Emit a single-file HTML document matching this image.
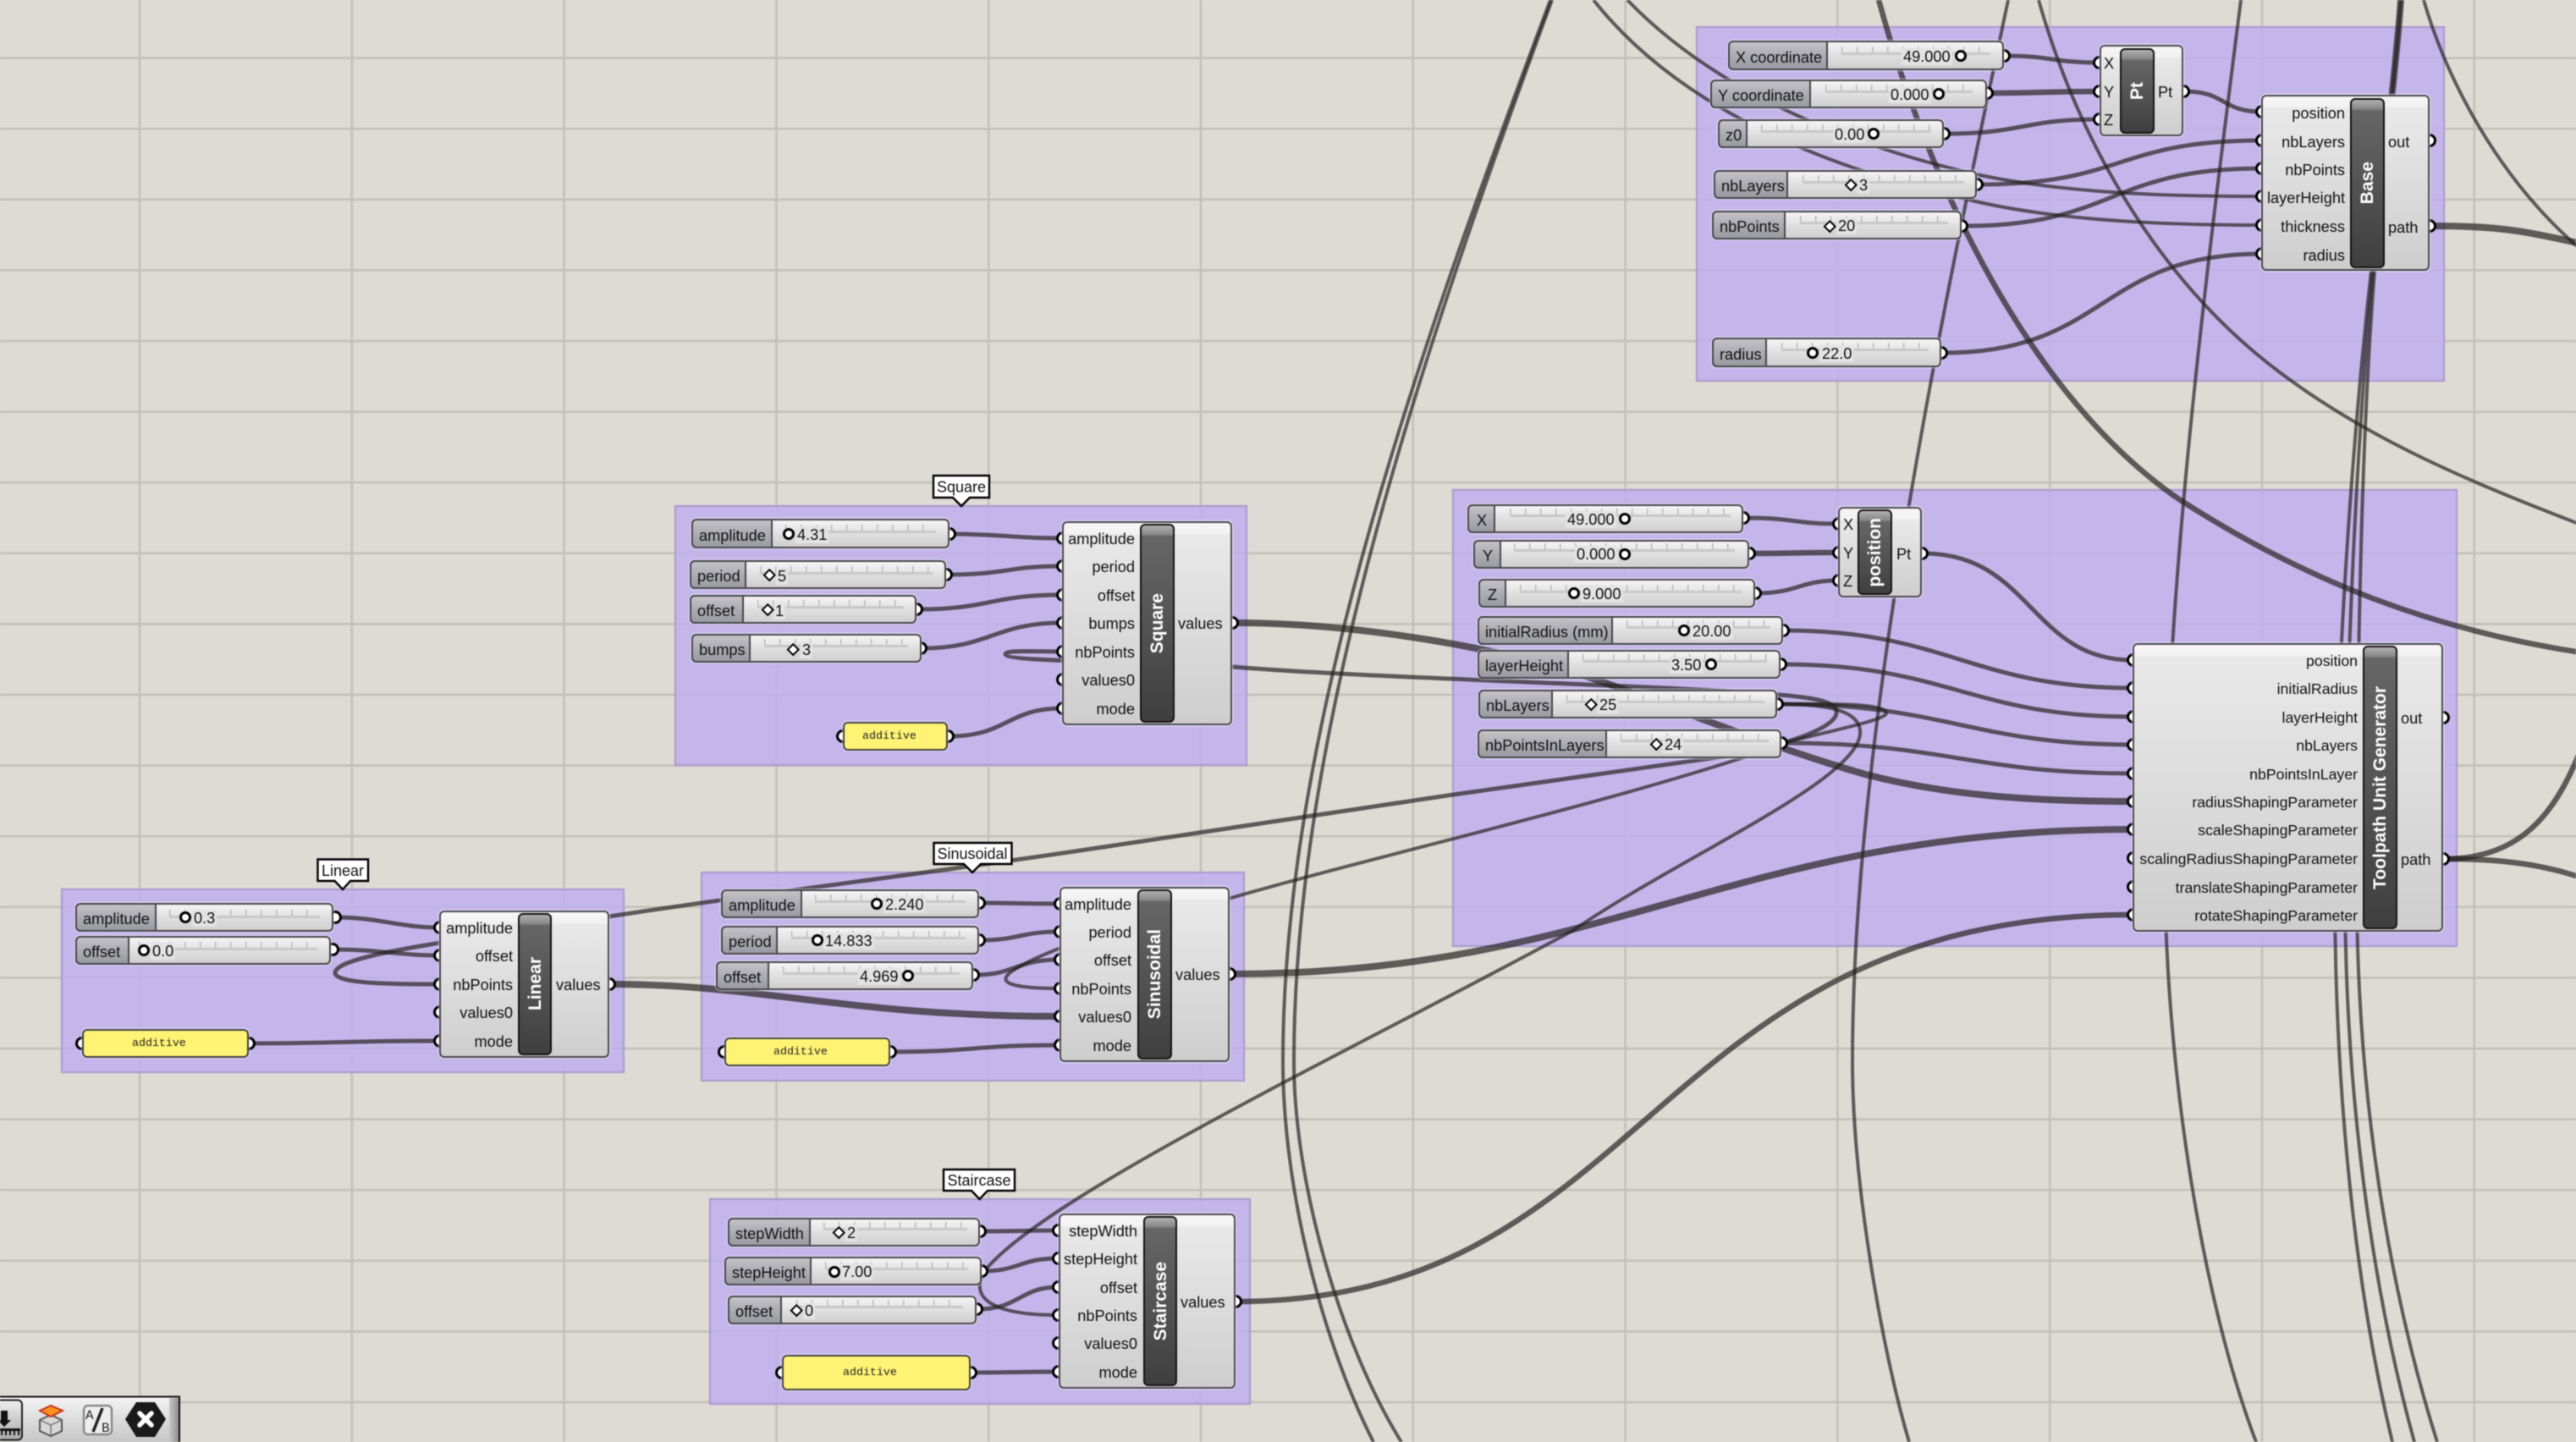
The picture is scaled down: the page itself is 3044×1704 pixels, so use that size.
<!DOCTYPE html>
<html><head><meta charset="utf-8"><title>Grasshopper canvas</title>
<style>
html,body{margin:0;padding:0;background:#dddbd4}
#r{position:relative;width:3044px;height:1704px;overflow:hidden;z-index:0;font-family:"Liberation Sans",sans-serif;font-size:18.2px;color:#111;background:#dddbd4;filter:blur(.45px)}
#r svg{position:absolute;left:0;top:0}
.gr{stroke:#c4c1b9;stroke-width:2.7;fill:none}
.gp{fill:rgb(192,176,238);fill-opacity:.86;stroke:#ac9fd0;stroke-width:2.3}
.w,.w2,.w3,.w4{fill:none;stroke:#23211e;stroke-opacity:.69;stroke-linecap:butt}
.w{stroke-width:4}.w2{stroke-width:5}.w3{stroke-width:8}.w4{stroke-width:6.5}
.g{position:absolute;width:16px;height:16px;margin:-8px 0 0 -8px;box-sizing:border-box;border:3.5px solid #000;border-radius:50%;background:#fff}
.s{position:absolute;box-sizing:border-box;border:2px solid #48484c;border-radius:6px;background:linear-gradient(#f4f4f4 0,#ececec 22%,#dedede 55%,#cfcfcf 100%);box-shadow:0 0 0 1.5px rgba(255,255,255,.35)}
b{position:absolute;box-sizing:border-box;font-weight:normal;padding:1.5px 0 0 7px;border:2px solid #48484c;border-radius:6px 0 0 6px;background:linear-gradient(#c4c4c8 0,#b2b2b8 35%,#9a9aa2 100%);white-space:pre}
.t{position:absolute;height:10px;background:linear-gradient(#c8c8c8,#c8c8c8) left bottom/100% 3px no-repeat,repeating-linear-gradient(90deg,#bababa 0,#bababa 1.6px,transparent 1.6px,transparent 18px)}
u{position:absolute;text-decoration:none;line-height:20px;margin:-10px 0 0 -2px;padding:0 2px;background:#e3e3e3}
.k{position:absolute;width:14px;height:14px;margin:-7px 0 0 -7px;box-sizing:border-box;border:3.6px solid #000;border-radius:50%;background:#fff}
.d{position:absolute;width:10.5px;height:10.5px;margin:-5.2px 0 0 -5.2px;box-sizing:border-box;border:2.4px solid #000;background:#fff;transform:rotate(45deg)}
.c{position:absolute;box-sizing:border-box;border:2px solid #4a4a50;border-radius:6px;background:linear-gradient(#f6f6f6 0,#f2f2f2 12px,#e9e9e9 14px,#cecece 100%);box-shadow:0 0 0 1.5px rgba(255,255,255,.4)}
.b{position:absolute;box-sizing:border-box;border:2px solid #151515;border-radius:6px;background:linear-gradient(#b0b0b0 0,#8a8a8a 10px,#666 13px,#3f3f3f 100%);display:flex;align-items:center;justify-content:center;overflow:hidden}
.b span{writing-mode:vertical-rl;transform:rotate(180deg);color:#fff;font-weight:bold;font-size:21px;white-space:nowrap;line-height:1}
p{position:absolute;margin:0;line-height:20px;white-space:pre}
p.f{font-size:17.7px}
.y{position:absolute;box-sizing:border-box;border:2px solid #444;border-radius:6px;background:#fff375;box-shadow:0 0 0 1.5px rgba(255,255,255,.35)}
tt{position:absolute;font-family:"Liberation Mono",monospace;font-size:13.3px;line-height:16px;margin-top:-8px;color:#222}
</style></head>
<body><div id="r">
<svg width="3044" height="1704" viewBox="0 0 3044 1704" style="z-index:-2">
<path class="gr" d="M165 0V1704M415.8 0V1704M666.6 0V1704M917.4 0V1704M1168.2 0V1704M1419 0V1704M1669.8 0V1704M1920.6 0V1704M2171.4 0V1704M2422.2 0V1704M2673 0V1704M2923.8 0V1704M0 68.6H3044M0 152.2H3044M0 235.8H3044M0 319.4H3044M0 403H3044M0 486.6H3044M0 570.2H3044M0 653.8H3044M0 737.4H3044M0 821H3044M0 904.6H3044M0 988.2H3044M0 1071.8H3044M0 1155.4H3044M0 1239H3044M0 1322.6H3044M0 1406.2H3044M0 1489.8H3044M0 1573.4H3044M0 1657H3044"/>
<rect class="gp" x="73" y="1051" width="664" height="216"/>
<rect class="gp" x="798" y="598" width="675" height="306"/>
<rect class="gp" x="829" y="1031" width="641" height="246"/>
<rect class="gp" x="839" y="1417" width="638" height="242"/>
<rect class="gp" x="2005" y="32" width="883" height="418"/>
<rect class="gp" x="1717" y="579" width="1186" height="539"/>
<!-- long background wires -->
<path class="w" d="M1832,0 C1690,380 1516,850 1516,1254 C1516,1400 1560,1580 1623,1704"/>
<path class="w" d="M1834,0 C1694,380 1529,850 1529,1254 C1529,1400 1585,1590 1656,1704"/>
<path class="w" d="M2373,0 C2310,300 2189,850 2189,1254 C2189,1400 2225,1600 2256,1704"/>
<path class="w" d="M2648,0 C2610,300 2558,700 2558,1020 C2558,1250 2600,1530 2666,1704"/>
<path class="w" d="M2835,0 C2826,120 2808,240 2802,320 C2780,520 2759,800 2759,1050 C2759,1300 2785,1530 2827,1704"/>
<path class="w" d="M2837,0 C2828,120 2810,240 2804,320 C2785,520 2771,800 2771,1050 C2771,1300 2805,1530 2853,1704"/>
<path class="w" d="M2839,0 C2830,120 2812,240 2806,320 C2790,520 2785,800 2785,1050 C2785,1300 2825,1530 2880,1704"/>
<path class="w4" d="M2220,0 C2280,220 2400,470 2575,590 C2730,690 2880,745 3050,771"/>
<path class="w" d="M2409,0 C2460,180 2560,340 2694,440 C2800,520 2920,570 3050,620"/>
<path class="w" d="M2864,0 C2890,90 2950,210 3050,295"/>
<path class="w" d="M1923,0 C2000,80 2130,160 2340,207 C2450,230 2580,232 2672,232"/>
<path class="w" d="M1883,0 C1970,110 2120,190 2322,235 C2430,262 2570,266 2672,266"/>
<!-- base group -->
<path class="w2" d="M2370,66 C2425,66 2425,74 2481,74"/>
<path class="w4" d="M2350,110 C2415,110 2415,108 2481,108"/>
<path class="w2" d="M2299,158 C2390,158 2390,141 2481,141"/>
<path class="w2" d="M2582,108 C2630,108 2625,132 2672,132"/>
<path class="w2" d="M2338,218 C2510,218 2500,166 2672,166"/>
<path class="w2" d="M2320,267 C2500,267 2490,199 2672,199"/>
<path class="w2" d="M2296,417 C2490,417 2480,300 2672,300"/>
<path class="w3" d="M2873,267 C2950,267 2980,272 3050,288"/>
<path class="w4" d="M2888,1015 C2980,1015 3020,960 3050,885"/>
<path class="w4" d="M2888,1015 C2950,1015 3000,1020 3050,1037"/>
<!-- toolpath group -->
<path class="w2" d="M2062,612 C2120,612 2120,619 2172,619"/>
<path class="w4" d="M2069,654 C2120,654 2120,653 2172,653"/>
<path class="w2" d="M2075,701 C2125,701 2125,686 2172,686"/>
<path class="w2" d="M2273,654 C2400,654 2400,780 2520,780"/>
<path class="w2" d="M2109,745 C2300,745 2330,813 2520,813"/>
<path class="w2" d="M2106,785 C2300,785 2330,847 2520,847"/>
<path class="w2" d="M2102,832 C2300,832 2330,880 2520,880"/>
<path class="w2" d="M2107,878 C2300,878 2330,914 2520,914"/>
<path class="w3" d="M1458,736 C1600,736 1780,765 1900,808 C2000,845 2100,885 2204,915 C2300,940 2400,947 2520,947"/>
<path class="w3" d="M1455,1151 C1900,1151 2050,980 2520,980"/>
<path class="w4" d="M1461,1538 C1950,1538 1950,1081 2520,1081"/>
<path class="w3" d="M722,1163 C900,1163 1000,1201 1252,1201"/>
<!-- loops -->
<path class="w" d="M2103,832 C2175,832 2200,845 2198,868 C2190,925 1990,1010 1858,1100 C1600,1240 1240,1410 1165,1500 C1145,1530 1165,1554 1250,1554"/>
<path class="w2" d="M2107,878 C2150,865 2172,852 2170,840 C2168,825 2120,822 2060,818 C1900,808 1600,800 1457,788 C1350,782 1188,782 1188,773 C1188,768 1220,770 1255,770"/>
<path class="w" d="M2107,878 C2170,862 2232,850 2229,842 C2225,830 2150,832 2100,832"/>
<path class="w2" d="M2100,885 C1900,912 1500,970 1310,1000 C1100,1032 900,1055 720,1083 C600,1105 394,1125 396,1150 C398,1163 470,1163 519,1163"/>
<path class="w" d="M2100,882 C1900,950 1650,1005 1455,1061 C1330,1095 1250,1115 1200,1145 C1175,1160 1190,1168 1252,1168"/>
<!-- linear local -->
<path class="w2" d="M396,1084 C450,1084 470,1096 519,1096"/>
<path class="w2" d="M393,1122 C450,1122 470,1129 519,1129"/>
<path class="w2" d="M295,1233 C400,1233 410,1230 519,1230"/>
<!-- square local -->
<path class="w2" d="M1123,631 C1190,631 1190,636 1255,636"/>
<path class="w2" d="M1120,679 C1190,679 1190,669 1255,669"/>
<path class="w2" d="M1085,720 C1170,720 1170,703 1255,703"/>
<path class="w2" d="M1090,766 C1170,766 1175,736 1255,736"/>
<path class="w2" d="M1122,870 C1190,870 1190,837 1255,837"/>
<!-- sinusoidal local -->
<path class="w2" d="M1158,1067 C1205,1067 1205,1068 1252,1068"/>
<path class="w2" d="M1158,1111 C1205,1111 1205,1101 1252,1101"/>
<path class="w2" d="M1152,1152 C1200,1152 1200,1134 1252,1134"/>
<path class="w2" d="M1053,1243 C1150,1243 1150,1235 1252,1235"/>
<!-- staircase local -->
<path class="w2" d="M1159,1455 C1205,1455 1205,1454 1250,1454"/>
<path class="w2" d="M1161,1502 C1205,1502 1205,1487 1250,1487"/>
<path class="w2" d="M1155,1547 C1205,1547 1205,1521 1250,1521"/>
<path class="w2" d="M1148,1622 C1200,1622 1200,1621 1250,1621"/>
</svg>

<!-- LINEAR -->
<i class="g" style="left:396px;top:1084px"></i><i class="g" style="left:393px;top:1122px"></i>
<i class="g" style="left:97px;top:1233px"></i><i class="g" style="left:294px;top:1233px"></i>
<i class="g" style="left:520px;top:1096px"></i><i class="g" style="left:520px;top:1129px"></i><i class="g" style="left:520px;top:1163px"></i><i class="g" style="left:520px;top:1196px"></i><i class="g" style="left:520px;top:1230px"></i><i class="g" style="left:720px;top:1163px"></i>

<div class="s" style="left:89px;top:1067px;width:305px;height:34px"></div><b style="left:89px;top:1067px;width:96px;height:34px;line-height:31px">amplitude</b><i class="t" style="left:200px;top:1075px;width:178px"></i><u style="left:229px;top:1085px">0.3</u><i class="k" style="left:219px;top:1084px"></i>
<div class="s" style="left:89px;top:1106px;width:302px;height:34px"></div><b style="left:89px;top:1106px;width:64px;height:34px;line-height:31px">offset</b><i class="t" style="left:164px;top:1113px;width:211px"></i><u style="left:180px;top:1124px">0.0</u><i class="k" style="left:170px;top:1123px"></i>
<div class="y" style="left:97px;top:1216px;width:197px;height:34px"></div><tt style="left:156px;top:1233px">additive</tt>

<div class="c" style="left:519px;top:1076px;width:201px;height:174px"></div>
<div class="b" style="left:612px;top:1079px;width:40px;height:168px"><span>Linear</span></div>
<p style="right:2438px;top:1087px">amplitude</p><p style="right:2438px;top:1120px">offset</p><p style="right:2438px;top:1154px">nbPoints</p><p style="right:2438px;top:1187px">values0</p><p style="right:2438px;top:1221px">mode</p><p style="left:657px;top:1154px">values</p>

<!-- SQUARE -->
<i class="g" style="left:1122px;top:631px"></i><i class="g" style="left:1118px;top:679px"></i><i class="g" style="left:1083px;top:720px"></i><i class="g" style="left:1088px;top:766px"></i><i class="g" style="left:996px;top:870px"></i><i class="g" style="left:1120px;top:870px"></i>
<i class="g" style="left:1256px;top:636px"></i><i class="g" style="left:1256px;top:669px"></i><i class="g" style="left:1256px;top:703px"></i><i class="g" style="left:1256px;top:736px"></i><i class="g" style="left:1256px;top:770px"></i><i class="g" style="left:1256px;top:803px"></i><i class="g" style="left:1256px;top:837px"></i><i class="g" style="left:1456px;top:736px"></i>

<div class="s" style="left:817px;top:613px;width:305px;height:35px"></div><b style="left:817px;top:613px;width:96px;height:35px;line-height:32px">amplitude</b><i class="t" style="left:928px;top:620px;width:178px"></i><u style="left:942px;top:632px">4.31</u><i class="k" style="left:932px;top:631px"></i>
<div class="s" style="left:815px;top:662px;width:303px;height:34px"></div><b style="left:815px;top:662px;width:67px;height:34px;line-height:31px">period</b><i class="t" style="left:898px;top:669px;width:204px"></i><u style="left:919px;top:681px">5</u><i class="d" style="left:909px;top:679px"></i>
<div class="s" style="left:815px;top:703px;width:268px;height:34px"></div><b style="left:815px;top:703px;width:64px;height:34px;line-height:31px">offset</b><i class="t" style="left:895px;top:709px;width:173px"></i><u style="left:916px;top:722px">1</u><i class="d" style="left:907px;top:720px"></i>
<div class="s" style="left:817px;top:749px;width:272px;height:34px"></div><b style="left:817px;top:749px;width:70px;height:34px;line-height:31px">bumps</b><i class="t" style="left:903px;top:755px;width:170px"></i><u style="left:948px;top:768px">3</u><i class="d" style="left:937px;top:767px"></i>
<div class="y" style="left:996px;top:853px;width:124px;height:34px"></div><tt style="left:1019px;top:870px">additive</tt>

<div class="c" style="left:1255px;top:616px;width:201px;height:241px"></div>
<div class="b" style="left:1347px;top:619px;width:41px;height:235px"><span>Square</span></div>
<p style="right:1703px;top:627px">amplitude</p><p style="right:1703px;top:660px">period</p><p style="right:1703px;top:694px">offset</p><p style="right:1703px;top:727px">bumps</p><p style="right:1703px;top:761px">nbPoints</p><p style="right:1703px;top:794px">values0</p><p style="right:1703px;top:828px">mode</p><p style="left:1392px;top:727px">values</p>

<!-- SINUSOIDAL -->
<i class="g" style="left:1157px;top:1067px"></i><i class="g" style="left:1157px;top:1111px"></i><i class="g" style="left:1150px;top:1152px"></i><i class="g" style="left:856px;top:1243px"></i><i class="g" style="left:1052px;top:1243px"></i>
<i class="g" style="left:1253px;top:1068px"></i><i class="g" style="left:1253px;top:1101px"></i><i class="g" style="left:1253px;top:1134px"></i><i class="g" style="left:1253px;top:1168px"></i><i class="g" style="left:1253px;top:1201px"></i><i class="g" style="left:1253px;top:1235px"></i><i class="g" style="left:1453px;top:1151px"></i>

<div class="s" style="left:852px;top:1051px;width:305px;height:34px"></div><b style="left:852px;top:1051px;width:96px;height:34px;line-height:31px">amplitude</b><i class="t" style="left:963px;top:1057px;width:178px"></i><u style="left:1046px;top:1069px">2.240</u><i class="k" style="left:1036px;top:1068px"></i>
<div class="s" style="left:852px;top:1094px;width:305px;height:34px"></div><b style="left:852px;top:1094px;width:67px;height:34px;line-height:31px">period</b><i class="t" style="left:935px;top:1100px;width:206px"></i><u style="left:975px;top:1112px">14.833</u><i class="k" style="left:966px;top:1111px"></i>
<div class="s" style="left:846px;top:1136px;width:304px;height:34px"></div><b style="left:846px;top:1136px;width:63px;height:34px;line-height:31px">offset</b><i class="t" style="left:925px;top:1142px;width:209px"></i><u style="left:1016px;top:1154px">4.969</u><i class="k" style="left:1073px;top:1153px"></i>
<div class="y" style="left:856px;top:1226px;width:196px;height:34px"></div><tt style="left:914px;top:1243px">additive</tt>

<div class="c" style="left:1252px;top:1048px;width:201px;height:207px"></div>
<div class="b" style="left:1344px;top:1051px;width:41px;height:201px"><span>Sinusoidal</span></div>
<p style="right:1707px;top:1059px">amplitude</p><p style="right:1707px;top:1092px">period</p><p style="right:1707px;top:1125px">offset</p><p style="right:1707px;top:1159px">nbPoints</p><p style="right:1707px;top:1192px">values0</p><p style="right:1707px;top:1226px">mode</p><p style="left:1389px;top:1142px">values</p>

<!-- STAIRCASE -->
<i class="g" style="left:1158px;top:1455px"></i><i class="g" style="left:1160px;top:1502px"></i><i class="g" style="left:1154px;top:1547px"></i><i class="g" style="left:924px;top:1622px"></i><i class="g" style="left:1147px;top:1622px"></i>
<i class="g" style="left:1251px;top:1454px"></i><i class="g" style="left:1251px;top:1487px"></i><i class="g" style="left:1251px;top:1521px"></i><i class="g" style="left:1251px;top:1554px"></i><i class="g" style="left:1251px;top:1587px"></i><i class="g" style="left:1251px;top:1621px"></i><i class="g" style="left:1460px;top:1538px"></i>

<div class="s" style="left:860px;top:1439px;width:298px;height:34px"></div><b style="left:860px;top:1439px;width:98px;height:34px;line-height:31px">stepWidth</b><i class="t" style="left:973px;top:1444px;width:170px"></i><u style="left:1001px;top:1457px">2</u><i class="d" style="left:991px;top:1456px"></i>
<div class="s" style="left:856px;top:1485px;width:304px;height:34px"></div><b style="left:856px;top:1485px;width:103px;height:34px;line-height:31px">stepHeight</b><i class="t" style="left:975px;top:1491px;width:169px"></i><u style="left:995px;top:1503px">7.00</u><i class="k" style="left:986px;top:1503px"></i>
<div class="s" style="left:860px;top:1531px;width:294px;height:34px"></div><b style="left:860px;top:1531px;width:64px;height:34px;line-height:31px">offset</b><i class="t" style="left:941px;top:1536px;width:197px"></i><u style="left:951px;top:1549px">0</u><i class="d" style="left:941px;top:1548px"></i>
<div class="y" style="left:924px;top:1601px;width:223px;height:42px"></div><tt style="left:996px;top:1622px">additive</tt>

<div class="c" style="left:1251px;top:1434px;width:209px;height:207px"></div>
<div class="b" style="left:1351px;top:1437px;width:40px;height:201px"><span>Staircase</span></div>
<p style="right:1700px;top:1445px">stepWidth</p><p style="right:1700px;top:1478px">stepHeight</p><p style="right:1700px;top:1512px">offset</p><p style="right:1700px;top:1545px">nbPoints</p><p style="right:1700px;top:1578px">values0</p><p style="right:1700px;top:1612px">mode</p><p style="left:1395px;top:1529px">values</p>

<!-- BASE GROUP -->
<i class="g" style="left:2368px;top:66px"></i><i class="g" style="left:2348px;top:110px"></i><i class="g" style="left:2297px;top:158px"></i><i class="g" style="left:2336px;top:218px"></i><i class="g" style="left:2318px;top:267px"></i><i class="g" style="left:2294px;top:417px"></i>
<i class="g" style="left:2481px;top:74px"></i><i class="g" style="left:2481px;top:108px"></i><i class="g" style="left:2481px;top:141px"></i><i class="g" style="left:2580px;top:108px"></i>
<i class="g" style="left:2673px;top:132px"></i><i class="g" style="left:2673px;top:166px"></i><i class="g" style="left:2673px;top:199px"></i><i class="g" style="left:2673px;top:232px"></i><i class="g" style="left:2673px;top:266px"></i><i class="g" style="left:2673px;top:300px"></i><i class="g" style="left:2871px;top:166px"></i><i class="g" style="left:2871px;top:267px"></i>

<div class="s" style="left:2042px;top:48px;width:326px;height:35px"></div><b style="left:2042px;top:48px;width:118px;height:35px;line-height:32px">X coordinate</b><i class="t" style="left:2176px;top:55px;width:176px"></i><u style="left:2249px;top:67px">49.000</u><i class="k" style="left:2317px;top:66px"></i>
<div class="s" style="left:2021px;top:94px;width:327px;height:34px"></div><b style="left:2021px;top:94px;width:119px;height:34px;line-height:31px">Y coordinate</b><i class="t" style="left:2157px;top:100px;width:174px"></i><u style="left:2234px;top:112px">0.000</u><i class="k" style="left:2291px;top:111px"></i>
<div class="s" style="left:2030px;top:141px;width:267px;height:34px"></div><b style="left:2030px;top:141px;width:35px;height:34px;line-height:31px">z0</b><i class="t" style="left:2081px;top:147px;width:201px"></i><u style="left:2168px;top:159px">0.00</u><i class="k" style="left:2214px;top:158px"></i>
<div class="s" style="left:2025px;top:201px;width:311px;height:34px"></div><b style="left:2025px;top:201px;width:88px;height:34px;line-height:31px">nbLayers</b><i class="t" style="left:2130px;top:207px;width:191px"></i><u style="left:2197px;top:219px">3</u><i class="d" style="left:2187px;top:218px"></i>
<div class="s" style="left:2023px;top:249px;width:295px;height:34px"></div><b style="left:2023px;top:249px;width:87px;height:34px;line-height:31px">nbPoints</b><i class="t" style="left:2127px;top:255px;width:175px"></i><u style="left:2172px;top:267px">20</u><i class="d" style="left:2162px;top:267px"></i>
<div class="s" style="left:2023px;top:399px;width:271px;height:35px"></div><b style="left:2023px;top:399px;width:65px;height:35px;line-height:32px">radius</b><i class="t" style="left:2105px;top:405px;width:174px"></i><u style="left:2153px;top:418px">22.0</u><i class="k" style="left:2142px;top:417px"></i>

<div class="c" style="left:2481px;top:53px;width:99px;height:108px"></div>
<div class="b" style="left:2505px;top:57px;width:41px;height:101px"><span>Pt</span></div>
<p style="left:2486px;top:65px">X</p><p style="left:2486px;top:99px">Y</p><p style="left:2486px;top:132px">Z</p><p style="left:2550px;top:99px">Pt</p>

<div class="c" style="left:2672px;top:112px;width:199px;height:208px"></div>
<div class="b" style="left:2777px;top:116px;width:41px;height:201px"><span>Base</span></div>
<p style="right:273px;top:124px">position</p><p style="right:273px;top:158px">nbLayers</p><p style="right:273px;top:191px">nbPoints</p><p style="right:273px;top:224px">layerHeight</p><p style="right:273px;top:258px">thickness</p><p style="right:273px;top:292px">radius</p><p style="left:2822px;top:158px">out</p><p style="left:2822px;top:259px">path</p>

<!-- TOOLPATH GROUP -->
<i class="g" style="left:2060px;top:612px"></i><i class="g" style="left:2067px;top:654px"></i><i class="g" style="left:2074px;top:701px"></i><i class="g" style="left:2107px;top:745px"></i><i class="g" style="left:2104px;top:785px"></i><i class="g" style="left:2100px;top:832px"></i><i class="g" style="left:2105px;top:878px"></i>
<i class="g" style="left:2173px;top:619px"></i><i class="g" style="left:2173px;top:653px"></i><i class="g" style="left:2173px;top:686px"></i><i class="g" style="left:2271px;top:654px"></i>
<i class="g" style="left:2521px;top:780px"></i><i class="g" style="left:2521px;top:813px"></i><i class="g" style="left:2521px;top:847px"></i><i class="g" style="left:2521px;top:880px"></i><i class="g" style="left:2521px;top:914px"></i><i class="g" style="left:2521px;top:947px"></i><i class="g" style="left:2521px;top:980px"></i><i class="g" style="left:2521px;top:1014px"></i><i class="g" style="left:2521px;top:1048px"></i><i class="g" style="left:2521px;top:1081px"></i><i class="g" style="left:2887px;top:848px"></i><i class="g" style="left:2887px;top:1015px"></i>

<div class="s" style="left:1734px;top:596px;width:326px;height:34px"></div><b style="left:1734px;top:596px;width:33px;height:34px;line-height:31px;padding-left:9px">X</b><i class="t" style="left:1784px;top:601px;width:261px"></i><u style="left:1852px;top:614px">49.000</u><i class="k" style="left:1920px;top:613px"></i>
<div class="s" style="left:1741px;top:638px;width:326px;height:34px"></div><b style="left:1741px;top:638px;width:33px;height:34px;line-height:31px;padding-left:9px">Y</b><i class="t" style="left:1789px;top:642px;width:261px"></i><u style="left:1863px;top:655px">0.000</u><i class="k" style="left:1920px;top:655px"></i>
<div class="s" style="left:1747px;top:684px;width:327px;height:34px"></div><b style="left:1747px;top:684px;width:33px;height:34px;line-height:31px;padding-left:9px">Z</b><i class="t" style="left:1796px;top:691px;width:262px"></i><u style="left:1870px;top:702px">9.000</u><i class="k" style="left:1860px;top:701px"></i>
<div class="s" style="left:1746px;top:728px;width:361px;height:34px"></div><b style="left:1746px;top:728px;width:160px;height:34px;line-height:31px">initialRadius (mm)</b><i class="t" style="left:1922px;top:733px;width:170px"></i><u style="left:2000px;top:746px">20.00</u><i class="k" style="left:1990px;top:745px"></i>
<div class="s" style="left:1746px;top:768px;width:358px;height:34px"></div><b style="left:1746px;top:768px;width:108px;height:34px;line-height:31px">layerHeight</b><i class="t" style="left:1870px;top:773px;width:218px"></i><u style="left:1975px;top:786px">3.50</u><i class="k" style="left:2022px;top:785px"></i>
<div class="s" style="left:1747px;top:815px;width:353px;height:34px"></div><b style="left:1747px;top:815px;width:88px;height:34px;line-height:31px">nbLayers</b><i class="t" style="left:1851px;top:821px;width:234px"></i><u style="left:1890px;top:833px">25</u><i class="d" style="left:1880px;top:832px"></i>
<div class="s" style="left:1746px;top:862px;width:359px;height:34px"></div><b style="left:1746px;top:862px;width:153px;height:34px;line-height:31px">nbPointsInLayers</b><i class="t" style="left:1915px;top:867px;width:175px"></i><u style="left:1967px;top:880px">24</u><i class="d" style="left:1957px;top:879px"></i>

<div class="c" style="left:2172px;top:599px;width:99px;height:107px"></div>
<div class="b" style="left:2195px;top:602px;width:41px;height:101px"><span>position</span></div>
<p style="left:2178px;top:610px">X</p><p style="left:2178px;top:644px">Y</p><p style="left:2178px;top:677px">Z</p><p style="left:2241px;top:645px">Pt</p>

<div class="c" style="left:2520px;top:760px;width:367px;height:341px"></div>
<div class="b" style="left:2792px;top:763px;width:41px;height:335px"><span>Toolpath Unit Generator</span></div>
<p class="f" style="right:258px;top:771px">position</p><p class="f" style="right:258px;top:804px">initialRadius</p><p class="f" style="right:258px;top:838px">layerHeight</p><p class="f" style="right:258px;top:871px">nbLayers</p><p class="f" style="right:258px;top:905px">nbPointsInLayer</p><p class="f" style="right:258px;top:938px">radiusShapingParameter</p><p class="f" style="right:258px;top:971px">scaleShapingParameter</p><p class="f" style="right:258px;top:1005px">scalingRadiusShapingParameter</p><p class="f" style="right:258px;top:1039px">translateShapingParameter</p><p class="f" style="right:258px;top:1072px">rotateShapingParameter</p><p style="left:2837px;top:839px">out</p><p style="left:2837px;top:1006px">path</p>

<svg width="3044" height="1704" viewBox="0 0 3044 1704" font-family="'Liberation Sans',sans-serif">
<defs>
<linearGradient id="tb" x1="0" y1="0" x2="0" y2="1"><stop offset="0" stop-color="#f4f4f4"/><stop offset="1" stop-color="#c4c4c4"/></linearGradient>
<linearGradient id="tr" x1="0" y1="0" x2="1" y2="0"><stop offset="0" stop-color="#c8c8c8"/><stop offset="1" stop-color="#8f8f8f"/></linearGradient>
<linearGradient id="ib" x1="0" y1="0" x2="0" y2="1"><stop offset="0" stop-color="#eee"/><stop offset="1" stop-color="#aaa"/></linearGradient>
</defs>
<!-- tooltips -->
<path fill="#fff" stroke="#000" stroke-width="2.4" d="M375.5,1015.5H435V1041H414L405,1051L395.5,1041H375.5Z"/>
<text x="405" y="1035" font-size="18" text-anchor="middle" fill="#111">Linear</text>
<path fill="#fff" stroke="#000" stroke-width="2.4" d="M1103,562H1169V588H1146L1136,598L1126,588H1103Z"/>
<text x="1136" y="581.500" font-size="18" text-anchor="middle" fill="#111">Square</text>
<path fill="#fff" stroke="#000" stroke-width="2.4" d="M1103.500,996H1195.500V1021H1159L1149,1031L1139,1021H1103.500Z"/>
<text x="1149" y="1015" font-size="18" text-anchor="middle" fill="#111">Sinusoidal</text>
<path fill="#fff" stroke="#000" stroke-width="2.4" d="M1115,1382H1199V1407H1167L1157.500,1417L1148,1407H1115Z"/>
<text x="1157" y="1401" font-size="18" text-anchor="middle" fill="#111">Staircase</text>
<!-- toolbar -->
<rect x="-3" y="1650.500" width="215" height="56" fill="url(#tb)" stroke="#111" stroke-width="2"/>
<rect x="200" y="1652" width="11" height="52" fill="url(#tr)"/>
<rect x="-8" y="1654.500" width="34" height="47" rx="5" fill="url(#ib)" stroke="#222" stroke-width="2"/>
<path fill="#111" d="M1,1667h8v11h4l-8,8-8-8h4z"/>
<path fill="#111" d="M0,1688h24v3h-1v5h-2v-5h-3v5h-2v-5h-3v5h-2v-5h-3v5h-2v-5h-3v5h-2v-5H0z"/>
<path d="M47,1678 60,1672 73,1678 73,1691 60,1697 47,1691Z" fill="#d8d8d8" stroke="#555" stroke-width="2"/>
<path d="M47,1678 60,1684 73,1678M60,1684V1697" fill="none" stroke="#777" stroke-width="1.500"/>
<path d="M47,1667 60,1661 74,1667 60,1674Z" fill="#f7931e" stroke="#c8321e" stroke-width="2"/>
<rect x="99" y="1661" width="33" height="34" rx="5" fill="#eee" stroke="#8a8a8a" stroke-width="2.500"/>
<line x1="110" y1="1692" x2="121" y2="1664" stroke="#222" stroke-width="3.500"/>
<text x="101" y="1677" font-size="16" font-family="'Liberation Mono',monospace" fill="#222">A</text>
<text x="120" y="1692" font-size="16" font-family="'Liberation Mono',monospace" fill="#222">B</text>
<path d="M148,1677 161,1657 183,1657 196,1677 183,1698 161,1698Z" fill="#1a1a1a"/>
<path d="M165,1670 179,1684M179,1670 165,1684" stroke="#fff" stroke-width="5.500" stroke-linecap="round"/>
</svg>
</div></body></html>
